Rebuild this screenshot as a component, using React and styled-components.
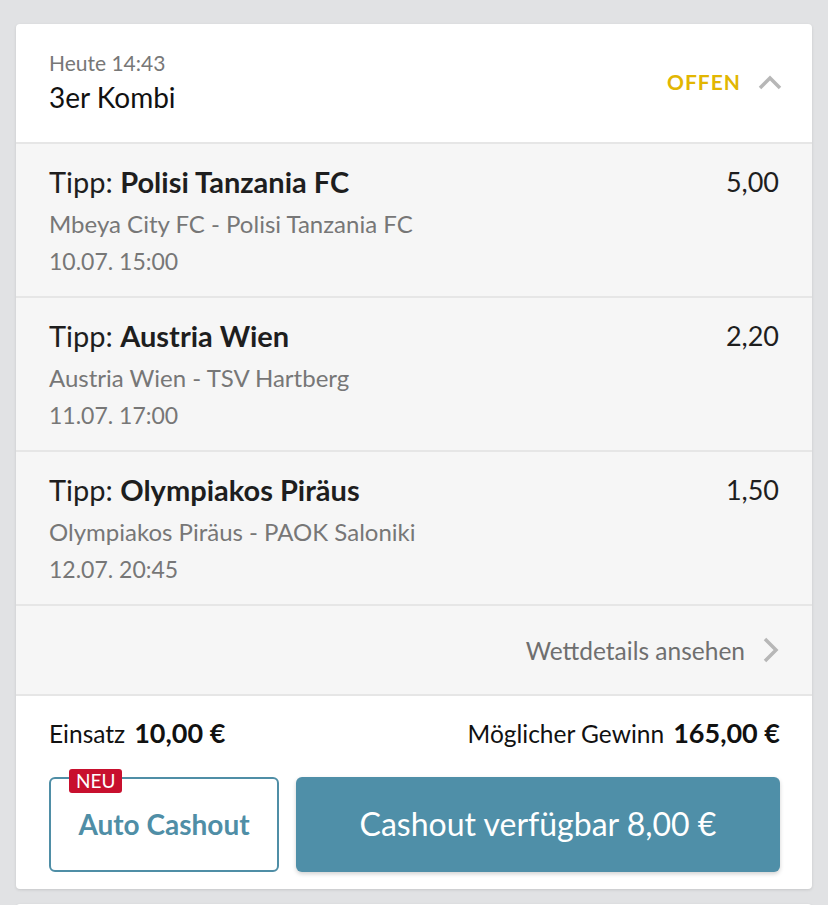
import React from "react";
import styled, { createGlobalStyle } from "styled-components";

const Global = createGlobalStyle`
  body {
    margin: 0;
    background: #e1e2e4;
    font-family: Lato, "Noto Sans", sans-serif;
    color: #1e1e1e;
  }
`;

const Page = styled.div`
  padding: 24px 16px 0;
  height: 905px;
  box-sizing: border-box;
  overflow: hidden;
`;

const Card = styled.section`
  background: #fff;
  border-radius: 4px;
  box-shadow: 0 1px 3px rgba(0, 0, 0, 0.12);
  overflow: hidden;
`;

const NextCard = styled.div`
  margin-top: 15px;
  height: 40px;
  background: #fff;
  border-radius: 4px;
  box-shadow: 0 1px 3px rgba(0, 0, 0, 0.12);
`;

const Header = styled.header`
  height: 118px;
  padding: 0 29px 0 33px;
  display: flex;
  align-items: center;
  justify-content: space-between;
  border-bottom: 2px solid #e6e6e6;
`;

const HeaderInfo = styled.div`
  display: flex;
  flex-direction: column;
  margin-top: 2px;
`;

const Time = styled.span`
  font-size: 21px;
  color: #777;
  line-height: 26px;
`;

const Title = styled.span`
  font-size: 28px;
  color: #111;
  line-height: 42px;
`;

const Status = styled.div`
  display: flex;
  align-items: center;
  gap: 16px;
  margin-top: -3px;
`;

const StatusLabel = styled.span`
  font-size: 21px;
  font-weight: 700;
  color: #e2b602;
  letter-spacing: 1px;
`;

const Selection = styled.div`
  background: #f6f6f6;
  height: 154px;
  padding: 21px 33px 0;
  box-sizing: border-box;
  border-bottom: 2px solid #e6e6e6;
  display: grid;
  grid-template-columns: 1fr auto;
  grid-template-rows: 34px 50px 24px;
`;

const Tip = styled.div`
  font-size: 29px;
  color: #1e1e1e;
  line-height: 34px;

  b {
    font-weight: 700;
  }
`;

const Odds = styled.div`
  font-size: 27px;
  line-height: 34px;
  color: #1e1e1e;
  text-align: right;
`;

const Sub = styled.div`
  grid-column: 1 / -1;
  font-size: ${(p) => p.$size || "24px"};
  color: #777;
  line-height: ${(p) => p.$lh || "50px"};
`;

const DetailsRow = styled.a`
  display: flex;
  align-items: center;
  justify-content: flex-end;
  gap: 17px;
  height: 88px;
  padding: 0 33px;
  background: #f6f6f6;
  border-bottom: 2px solid #e6e6e6;
  font-size: 24.5px;
  color: #6f6f6f;
  text-decoration: none;
`;

const Footer = styled.footer`
  padding: 22px 32px 17px 33px;
  display: flex;
  flex-direction: column;
  gap: 28px;
`;

const Amounts = styled.div`
  display: flex;
  justify-content: space-between;
  align-items: baseline;
  line-height: 30px;
`;

const Amount = styled.div`
  font-size: 24.5px;
  color: #111;

  b {
    font-size: 27px;
    font-weight: 700;
    margin-left: 9px;
  }
`;

const Buttons = styled.div`
  display: grid;
  grid-template-columns: 230px 1fr;
  gap: 17px;
  height: 95px;
`;

const AutoButton = styled.button`
  position: relative;
  background: #fff;
  border: 2px solid #4f8ea6;
  border-radius: 6px;
  color: #4f8ea6;
  font-family: inherit;
  font-size: 28px;
  font-weight: 700;
  padding: 0 0 2px;
`;

const Badge = styled.span`
  position: absolute;
  top: -10px;
  left: 18px;
  background: #c8102e;
  color: #fff;
  font-size: 19px;
  font-weight: 400;
  line-height: 24px;
  padding: 0 7px;
  border-radius: 3px;
`;

const CashoutButton = styled.button`
  background: #4f8fa8;
  border: none;
  border-radius: 6px;
  color: #fff;
  font-family: inherit;
  font-size: 32px;
  padding: 0 0 2px;
  box-shadow: 0 2px 4px rgba(0, 0, 0, 0.18);
`;

const ChevronUp = () => (
  <svg width="26" height="26" viewBox="0 0 26 26" fill="none">
    <path d="M3 19 L13 9 L23 19" stroke="#b7b7b7" strokeWidth="3.5" />
  </svg>
);

const ChevronRight = () => (
  <svg width="17" height="26" viewBox="0 0 17 26" fill="none">
    <path d="M3 2 L14 13 L3 24" stroke="#b7b7b7" strokeWidth="3.5" />
  </svg>
);

const bets = [
  {
    tip: "Polisi Tanzania FC",
    odds: "5,00",
    match: "Mbeya City FC - Polisi Tanzania FC",
    date: "10.07. 15:00",
  },
  {
    tip: "Austria Wien",
    odds: "2,20",
    match: "Austria Wien - TSV Hartberg",
    date: "11.07. 17:00",
  },
  {
    tip: "Olympiakos Piräus",
    odds: "1,50",
    match: "Olympiakos Piräus - PAOK Saloniki",
    date: "12.07. 20:45",
  },
];

export default function App() {
  return (
    <Page>
      <Global />
      <Card>
        <Header>
          <HeaderInfo>
            <Time>Heute 14:43</Time>
            <Title>3er Kombi</Title>
          </HeaderInfo>
          <Status>
            <StatusLabel>OFFEN</StatusLabel>
            <ChevronUp />
          </Status>
        </Header>
        {bets.map((b) => (
          <Selection key={b.tip}>
            <Tip>
              Tipp: <b>{b.tip}</b>
            </Tip>
            <Odds>{b.odds}</Odds>
            <Sub>{b.match}</Sub>
            <Sub $size="23px" $lh="24px">
              {b.date}
            </Sub>
          </Selection>
        ))}
        <DetailsRow href="#">
          Wettdetails ansehen
          <ChevronRight />
        </DetailsRow>
        <Footer>
          <Amounts>
            <Amount>
              Einsatz<b>10,00 €</b>
            </Amount>
            <Amount>
              Möglicher Gewinn<b>165,00 €</b>
            </Amount>
          </Amounts>
          <Buttons>
            <AutoButton>
              <Badge>NEU</Badge>
              Auto Cashout
            </AutoButton>
            <CashoutButton>Cashout verfügbar 8,00 €</CashoutButton>
          </Buttons>
        </Footer>
      </Card>
      <NextCard />
    </Page>
  );
}
